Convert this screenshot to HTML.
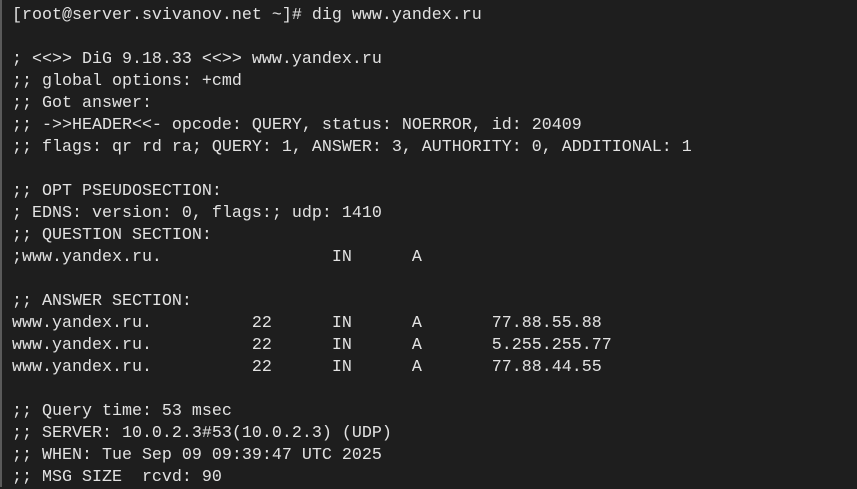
<!DOCTYPE html>
<html><head><meta charset="utf-8"><style>
html,body{margin:0;padding:0;background:#1e1e1e;width:857px;height:487px;overflow:hidden}
.l{position:absolute;left:0;top:0;width:2px;height:487px;background:#5a5a5a}
pre{margin:0;position:absolute;left:12px;top:5px;font-family:"Liberation Mono",monospace;font-size:16.67px;line-height:22px;color:#e2e2e2}
</style></head><body><div class="l"></div><pre>[root@server.svivanov.net ~]# dig www.yandex.ru

; &lt;&lt;&gt;&gt; DiG 9.18.33 &lt;&lt;&gt;&gt; www.yandex.ru
;; global options: +cmd
;; Got answer:
;; -&gt;&gt;HEADER&lt;&lt;- opcode: QUERY, status: NOERROR, id: 20409
;; flags: qr rd ra; QUERY: 1, ANSWER: 3, AUTHORITY: 0, ADDITIONAL: 1

;; OPT PSEUDOSECTION:
; EDNS: version: 0, flags:; udp: 1410
;; QUESTION SECTION:
;www.yandex.ru.                 IN      A

;; ANSWER SECTION:
www.yandex.ru.          22      IN      A       77.88.55.88
www.yandex.ru.          22      IN      A       5.255.255.77
www.yandex.ru.          22      IN      A       77.88.44.55

;; Query time: 53 msec
;; SERVER: 10.0.2.3#53(10.0.2.3) (UDP)
;; WHEN: Tue Sep 09 09:39:47 UTC 2025
;; MSG SIZE  rcvd: 90</pre></body></html>
